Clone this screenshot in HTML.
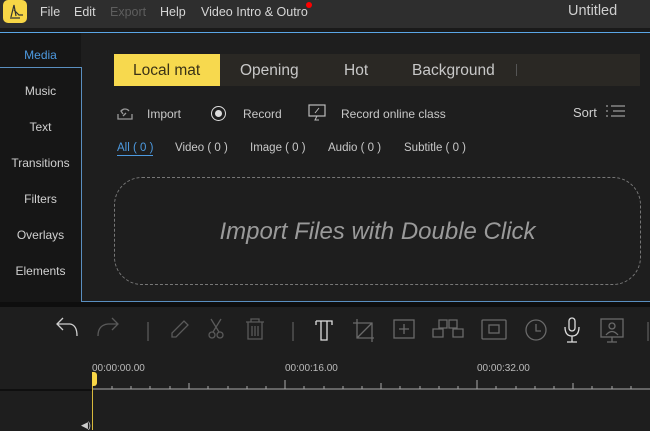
<!DOCTYPE html>
<html><head><meta charset="utf-8"><style>
*{margin:0;padding:0;box-sizing:border-box}
body{width:650px;height:430px;overflow:hidden;background:#1e1e1e;font-family:"Liberation Sans","DejaVu Sans",sans-serif;position:relative;color:#cfcfcf}
.a{position:absolute;white-space:nowrap}
.top{position:absolute;left:0;top:0;width:650px;height:28px;background:#2e2e2e}
.menu{font-size:12.5px;color:#d6d6d6;top:5px}
.side{font-size:12px;color:#d0d0d0;width:81px;text-align:center;left:0}
.f{font-size:12px;color:#c8c8c8}
svg{position:absolute;overflow:visible}
.ic{fill:none;stroke:#6a6a6a;stroke-width:1.3}
</style></head><body>
<div class="top"></div>
<div class="a" style="left:3px;top:0;width:24px;height:23px;background:#f7d646;border-radius:5px"></div>
<svg style="left:3px;top:0" width="24" height="23"><path d="M8 17 L11 5 L13 16 M11 10 L16 15 L20 15 M7 18 L17 18" stroke="#333" stroke-width="1.2" fill="none"/></svg>
<div class="a menu" style="left:40px">File</div>
<div class="a menu" style="left:74px">Edit</div>
<div class="a menu" style="left:110px;color:#5e5e5e">Export</div>
<div class="a menu" style="left:160px">Help</div>
<div class="a menu" style="left:201px">Video Intro &amp; Outro</div>
<div class="a" style="left:306px;top:2px;width:6px;height:6px;border-radius:50%;background:#f00"></div>
<div class="a" style="left:568px;top:3px;font-size:14.5px;color:#cfcfcf">Untitled</div>
<div class="a" style="left:0;top:28px;width:650px;height:4px;background:#1a1a1a"></div>
<div class="a" style="left:0;top:32px;width:650px;height:1px;background:#5aa6e6"></div>
<div class="a" style="left:0;top:33px;width:650px;height:269px;background:#1e1e1e"></div>
<div class="a" style="left:0;top:33px;width:81px;height:269px;background:#161616"></div>
<div class="a" style="left:0;top:67px;width:82px;height:1px;background:#5a8fc0"></div>
<div class="a" style="left:81px;top:67px;width:1px;height:235px;background:#5a8fc0"></div>
<div class="a" style="left:81px;top:301px;width:569px;height:1px;background:#5a8fc0"></div>
<div class="a" style="left:82px;top:68px;width:568px;height:233px;background:#1e1e1e"></div>
<div class="a side" style="top:48px;color:#4d9ae0">Media</div>
<div class="a side" style="top:84px">Music</div>
<div class="a side" style="top:120px">Text</div>
<div class="a side" style="top:156px">Transitions</div>
<div class="a side" style="top:192px">Filters</div>
<div class="a side" style="top:228px">Overlays</div>
<div class="a side" style="top:264px">Elements</div>
<div class="a" style="left:114px;top:54px;width:526px;height:32px;background:#2a2824"></div>
<div class="a" style="left:114px;top:54px;width:106px;height:32px;background:#f7d94e"></div>
<div class="a" style="left:133px;top:62px;font-size:15.5px;color:#3a3216">Local mat</div>
<div class="a" style="left:240px;top:62px;font-size:15.5px;color:#c8c8c8">Opening</div>
<div class="a" style="left:344px;top:62px;font-size:15.5px;color:#c8c8c8">Hot</div>
<div class="a" style="left:412px;top:62px;font-size:15.5px;color:#c8c8c8">Background</div>
<div class="a" style="left:516px;top:64px;width:1px;height:12px;background:#555"></div>
<svg style="left:116px;top:105px" width="18" height="16" class="ic"><path d="M2 9 L2 14 L16 14 L16 9 M5 6 A5 5 0 0 1 13 6 M8 4 L5 6 L7 9 M10 8 L7 11" stroke="#999" fill="none"/></svg>
<div class="a f" style="left:147px;top:107px">Import</div>
<div class="a" style="left:211px;top:106px;width:15px;height:15px;border:1.5px solid #ddd;border-radius:50%"></div>
<div class="a" style="left:215px;top:110px;width:7px;height:7px;background:#ddd;border-radius:50%"></div>
<div class="a f" style="left:243px;top:107px">Record</div>
<svg style="left:308px;top:104px" width="18" height="18"><rect x="1" y="1" width="16" height="11" fill="none" stroke="#bbb" stroke-width="1.2"/><path d="M7 9 L11 4 M9 12 L7 16 L11 16" stroke="#bbb" fill="none"/></svg>
<div class="a f" style="left:341px;top:107px">Record online class</div>
<div class="a" style="left:573px;top:105px;font-size:13px;color:#cfcfcf">Sort</div>
<svg style="left:606px;top:104px" width="20" height="16"><path d="M0 2h2M0 7h2M0 12h2M5 2h14M7 7h12M5 12h14" stroke="#bbb" stroke-width="1"/></svg>
<div class="a" style="left:117px;top:142px;font-size:11.5px;color:#4d9ae0;border-bottom:1px solid #4d9ae0;padding-bottom:1px">All ( 0 )</div>
<div class="a f" style="left:175px;top:142px;font-size:11.5px">Video ( 0 )</div>
<div class="a f" style="left:250px;top:142px;font-size:11.5px">Image ( 0 )</div>
<div class="a f" style="left:328px;top:142px;font-size:11.5px">Audio ( 0 )</div>
<div class="a f" style="left:404px;top:142px;font-size:11.5px">Subtitle ( 0 )</div>
<div class="a" style="left:114px;top:177px;width:527px;height:108px;border:1px dashed #777;border-radius:28px"></div>
<div class="a" style="left:114px;top:218px;width:527px;text-align:center;font-size:24px;font-style:italic;color:#9a9a9a">Import Files with Double Click</div>
<div class="a" style="left:0;top:302px;width:650px;height:5px;background:#0e0e0e"></div>
<svg style="left:0;top:307px" width="650" height="50">
<g fill="none" stroke="#cfcfcf" stroke-width="1.3">
<path d="M63 23 L57 17 L63 11 M57 17 L70 17 Q77 18 77 29"/>
</g>
<g fill="none" stroke="#5a5a5a" stroke-width="1.3">
<path d="M112 23 L118 17 L112 11 M118 17 L108 17 Q98 18 98 29"/>
<path d="M148 15 V34 M293 15 V34 M648 15 V34"/>
<path d="M172 30 L172 26 L184 14 L188 18 L176 30 Z"/>
<path d="M211 12 L219 25 M221 12 L213 25"/><circle cx="212" cy="28" r="3"/><circle cx="220" cy="28" r="3"/>
<path d="M246 15 H264 M251 15 V12 H259 V15 M248 15 V32 H262 V15 M252 19 V29 M255 19 V29 M258 19 V29"/>
</g>
<g fill="none" stroke="#ddd" stroke-width="1.3"><path d="M316 14 H332 V18 M316 14 V18 M321 14 V33 H327 V14"/></g>
<g fill="none" stroke="#6a6a6a" stroke-width="1.3">
<path d="M357 12 V31 H374 M353 16 H372 V35 M357 31 L372 16"/>
<rect x="394" y="13" width="20" height="18"/><path d="M404 17 V27 M399 22 H409"/>
<path d="M439 13 h8 v8 h-8z M449 13 h8 v8 h-8z M433 22 h10 v8 h-10z M453 22 h10 v8 h-10z" />
<rect x="482" y="13" width="24" height="19" rx="1"/><rect x="489" y="18" width="10" height="8"/>
<circle cx="536" cy="23" r="10"/><path d="M536 17 V24 H541"/>
<rect x="601" y="12" width="22" height="18"/><circle cx="612" cy="19" r="3"/><path d="M606 28 Q612 21 618 28 M612 30 V35 M607 35 H617"/>
</g>
<g fill="none" stroke="#ddd" stroke-width="1.3"><rect x="569" y="11" width="6" height="13" rx="3"/><path d="M565 20 Q565 29 572 29 Q579 29 579 20 M572 29 V35 M567 35 H577"/></g>
</svg>
<div class="a" style="left:92px;top:363px;font-size:10px;color:#bbb">00:00:00.00</div>
<div class="a" style="left:285px;top:363px;font-size:10px;color:#bbb">00:00:16.00</div>
<div class="a" style="left:477px;top:363px;font-size:10px;color:#bbb">00:00:32.00</div>
<svg style="left:0;top:378px" width="650" height="14">
<line x1="92" y1="11" x2="650" y2="11" stroke="#aaa" stroke-width="1"/>
<line x1="0" y1="12" x2="92" y2="12" stroke="#000" stroke-width="1"/>
<g stroke="#aaa" stroke-width="1">
<path d="M112 8V11M131 8V11M150 8V11M170 8V11M189 5V11M208 8V11M228 8V11M247 8V11M266 8V11M285 2V11M304 8V11M324 8V11M343 8V11M362 8V11M381 5V11M400 8V11M420 8V11M439 8V11M458 8V11M477 2V11M496 8V11M516 8V11M535 8V11M554 8V11M573 5V11M592 8V11M612 8V11M631 8V11"/>
</g>
</svg>
<div class="a" style="left:92px;top:374px;width:1px;height:56px;background:#d8b93c"></div>
<div class="a" style="left:92px;top:372px;width:5px;height:14px;background:#f7d646;border-radius:0 3px 3px 0"></div>
<div class="a" style="left:81px;top:420px;font-size:9px;color:#ccc">◀)</div>
</body></html>
